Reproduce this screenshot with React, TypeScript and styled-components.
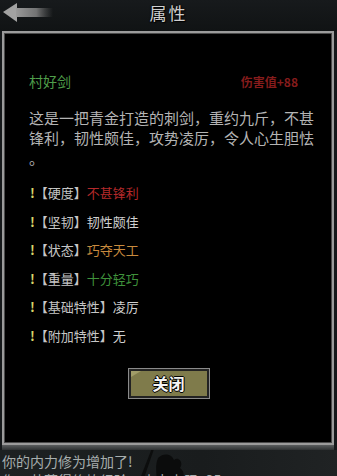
import React from "react";
import styled, { createGlobalStyle } from "styled-components";

const Global = createGlobalStyle`
  *, *::before, *::after { box-sizing: border-box; }
  html, body { margin: 0; padding: 0; background: #15181a; }
  body { font-family: "Noto Sans CJK SC", "Noto Sans", sans-serif; }
`;

const Page = styled.div`
  width: 337px;
  height: 476px;
  overflow: hidden;
  display: flex;
  flex-direction: column;
  background: #15181a;
`;

const TopBar = styled.div`
  height: 31px;
  flex: none;
  position: relative;
  display: flex;
  align-items: center;
  justify-content: center;
  background: linear-gradient(#171a1c, #101314);
`;

const BackArrow = styled.svg`
  position: absolute;
  left: 2px;
  top: 2px;
`;

const Title = styled.div`
  font-size: 17px;
  color: #cfcfcf;
  letter-spacing: 2px;
  margin-top: -6px;
  text-shadow: 0 0 2px #000, 1px 1px 1px #000;
`;

const Panel = styled.div`
  flex: none;
  height: 414px;
  margin: 0 3px 0 2px;
  border: 2px solid #9b9b9b;
  box-shadow: inset 0 0 0 1px #4a4a4a;
  background: #000;
  display: flex;
  flex-direction: column;
  padding: 40px 22px 0 25px;
`;

const Header = styled.div`
  display: flex;
  justify-content: space-between;
  align-items: center;
  height: 16px;
`;

const ItemName = styled.div`
  font-size: 14px;
  color: #4f9e4a;
`;

const Damage = styled.div`
  font-size: 12px;
  color: #861c1c;
  font-weight: bold;
  margin-right: 12px;
`;

const Description = styled.div`
  margin-top: 19px;
  font-size: 15px;
  line-height: 20px;
  color: #b4b4b4;
  white-space: nowrap;
`;

const DescLine = styled.div`
  height: 20px;
`;

const PropList = styled.div`
  margin-top: 16px;
  display: flex;
  flex-direction: column;
  gap: 11.5px;
`;

const PropRow = styled.div`
  display: flex;
  align-items: center;
  height: 17px;
  font-size: 13px;
  color: #c6c6c6;
`;

const Bang = styled.span`
  color: #d8d66a;
  font-weight: bold;
  margin-left: 1px;
`;

const Value = styled.span<{ $color: string }>`
  color: ${(p) => p.$color};
`;

const ButtonRow = styled.div`
  display: flex;
  justify-content: center;
  margin-top: 24px;
  padding-right: 2px;
`;

const CloseButton = styled.button`
  position: relative;
  width: 82px;
  height: 31px;
  padding: 0;
  border: 1px solid #8a8a8a;
  box-shadow: inset 0 0 0 2px #222;
  background: #7f7b4b;
  color: #f4f4f4;
  font-family: "Noto Sans CJK SC", sans-serif;
  font-size: 16px;
  font-weight: bold;
  text-shadow: -1px 0 #000, 1px 0 #000, 0 -1px #000, 0 1px #000;
  cursor: pointer;
`;

const Notch = styled.span`
  position: absolute;
  left: 2px;
  top: 2px;
  width: 0;
  height: 0;
  border-top: 6px solid #a19d68;
  border-right: 10px solid transparent;
`;

const Strip = styled.div`
  flex: none;
  height: 5px;
  margin: 0 3px 0 2px;
  background: linear-gradient(#5a5d5e, #2e3132);
`;

const LogArea = styled.div`
  position: relative;
  flex: 1;
  min-height: 0;
  overflow: hidden;
  background: linear-gradient(90deg, #1d2122, #191c1d 60%, #202324);
  padding: 2px 0 0 2px;
`;

const LogLine = styled.div`
  position: relative;
  font-size: 14px;
  line-height: 19px;
  color: #a7aeae;
  white-space: nowrap;
`;

const Silhouette = styled.svg`
  position: absolute;
  left: 128px;
  top: -6px;
`;

const props = [
  { k: "硬度", v: "不甚锋利", c: "#b3292a" },
  { k: "坚韧", v: "韧性颇佳", c: "#cfcfcf" },
  { k: "状态", v: "巧夺天工", c: "#c88a3e" },
  { k: "重量", v: "十分轻巧", c: "#3f923b" },
  { k: "基础特性", v: "凌厉", c: "#cfcfcf" },
  { k: "附加特性", v: "无", c: "#cfcfcf" },
];

export default function App() {
  return (
    <Page>
      <Global />
      <TopBar>
        <BackArrow width="52" height="22" viewBox="0 0 52 22">
          <defs>
            <linearGradient id="shaft" x1="0" x2="1" y1="0" y2="0">
              <stop offset="0" stopColor="#9a9a9a" />
              <stop offset="0.55" stopColor="#8a8a8a" stopOpacity="0.8" />
              <stop offset="1" stopColor="#6a6a6a" stopOpacity="0" />
            </linearGradient>
          </defs>
          <polygon points="1,10 15,1 15,20" fill="#a2a2a2" />
          <rect x="14" y="6" width="37" height="9" fill="url(#shaft)" />
        </BackArrow>
        <Title>属性</Title>
      </TopBar>
      <Panel>
        <Header>
          <ItemName>村好剑</ItemName>
          <Damage>伤害值+88</Damage>
        </Header>
        <Description>
          <DescLine>这是一把青金打造的刺剑，重约九斤，不甚</DescLine>
          <DescLine>锋利，韧性颇佳，攻势凌厉，令人心生胆怯</DescLine>
          <DescLine>。</DescLine>
        </Description>
        <PropList>
          {props.map((p) => (
            <PropRow key={p.k}>
              <Bang>!</Bang>
              <span>【{p.k}】</span>
              <Value $color={p.c}>{p.v}</Value>
            </PropRow>
          ))}
        </PropList>
        <ButtonRow>
          <CloseButton>
            <Notch />
            关闭
          </CloseButton>
        </ButtonRow>
      </Panel>
      <Strip />
      <LogArea>
        <Silhouette width="70" height="40" viewBox="0 0 70 40">
          <path d="M10 40 L24 4 L26 5 L14 40 Z" fill="#0c0d0d" />
          <path d="M30 14 C36 8 44 10 46 16 C50 12 56 18 52 24 C58 28 56 36 50 40 L28 40 C30 32 26 24 30 14 Z" fill="#0b0c0c" />
        </Silhouette>
        <LogLine>你的内力修为增加了!</LogLine>
        <LogLine>你一共获得修炼经验，内力上限+35</LogLine>
      </LogArea>
    </Page>
  );
}
